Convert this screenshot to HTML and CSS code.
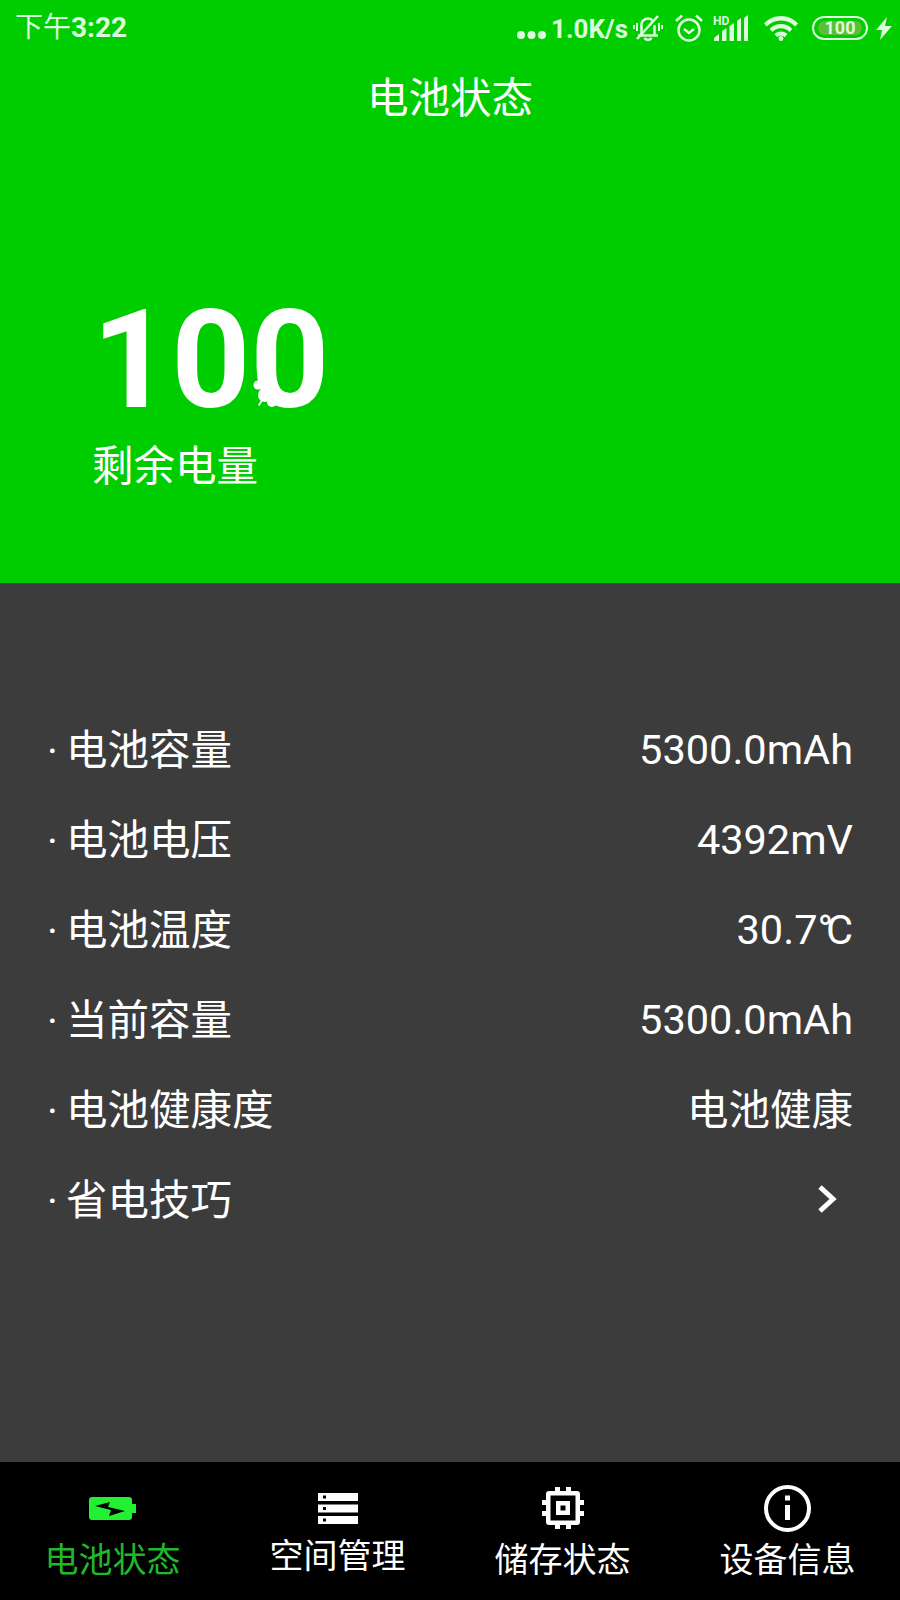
FILE: index.html
```html
<!DOCTYPE html>
<html>
<head>
    <title>电池状态</title>
    <link rel="stylesheet" href="styles.css">
</head>
<body>
    <div class="hero">
        <div class="status">
            <div class="time">下午<b>3:22</b></div>
            <div class="status-icons">
                <svg class="ic-dots" width="31" height="10" viewBox="0 0 31 10"><circle cx="5" cy="5" r="4"/><circle cx="15.500" cy="5" r="4"/><circle cx="26" cy="5" r="4"/></svg>
                <span class="speed">1.0K/s</span>
                <svg class="ic-line" width="30" height="28" viewBox="0 0 30 28" fill="none"><path d="M8.500 21v-9a6.500 6.500 0 0 1 11.500-5M21.500 11v10M5 21.500h20M11.500 24c1.500 2.500 5.500 2.500 7 0" stroke-width="2.500"/><path d="M4 25 25 2" stroke-width="2.500"/><path d="M4 9v8M1 11v4M26 9v8M29 11v4" stroke-width="2"/></svg>
                <svg class="ic-line ic-alarm" width="30" height="30" viewBox="0 0 30 30" fill="none"><circle cx="15" cy="17" r="10.500" stroke-width="2.500"/><path d="M10 16l5 4 5-4M2 8l6-5.500M22 2.500 28 8" stroke-width="2.500"/></svg>
                <svg class="ic-signal" width="36" height="26" viewBox="0 0 36 26"><path d="M1 26v-3l5-4v7zM9 26v-10l4.500-3v13zM16.500 26V11l4.500-3v18zM24 26V6l4-3v23zM31 26V3l4-3v26z"/><text x="0" y="10" class="hd">HD</text></svg>
                <svg class="ic-wifi" width="34" height="25" viewBox="0 0 36 25" preserveAspectRatio="none"><path d="M18 0C11 0 5 2.700 0 7.500l3 3C7 6.500 12 4.500 18 4.500s11 2 15 6l3-3C31 2.700 25 0 18 0z"/><path d="M18 8c-4.700 0-9 1.800-12 5l3 3c2.300-2.400 5.500-3.700 9-3.700s6.700 1.300 9 3.700l3-3c-3-3.200-7.300-5-12-5z"/><path d="M18 15.500c-2.700 0-5 1-6.800 2.700l3 3c1-.9 2.300-1.400 3.800-1.400s2.800.5 3.800 1.400l3-3c-1.800-1.700-4.100-2.700-6.800-2.700z"/><circle cx="18" cy="22.500" r="2.500"/></svg>
                <div class="batt"><div class="batt-fill">100</div></div>
                <svg class="ic-bolt" width="16" height="23" viewBox="0 0 16 23"><path d="M11 0 0 13h6l-2 10L16 9H9z"/></svg>
            </div>
        </div>
        <h1 class="title">电池状态</h1>
        <div class="level">100<svg class="blob" width="30" height="32" viewBox="0 0 30 32"><circle cx="8" cy="10" r="4.500"/><circle cx="13" cy="9" r="6"/><circle cx="15" cy="20" r="7"/><circle cx="22" cy="27" r="5"/><path d="M8 30 14 20l1.500 1-6 10z"/></svg></div>
        <div class="level-label">剩余电量</div>
    </div>

    <div class="list">
        <div class="row"><span class="dot">·</span><span class="name">电池容量</span><span class="value">5300.0mAh</span></div>
        <div class="row"><span class="dot">·</span><span class="name">电池电压</span><span class="value">4392mV</span></div>
        <div class="row"><span class="dot">·</span><span class="name">电池温度</span><span class="value">30.7<span class="deg">°</span>C</span></div>
        <div class="row"><span class="dot">·</span><span class="name">当前容量</span><span class="value">5300.0mAh</span></div>
        <div class="row"><span class="dot">·</span><span class="name">电池健康度</span><span class="value cn">电池健康</span></div>
        <div class="row"><span class="dot">·</span><span class="name">省电技巧</span>
            <svg class="arrow" width="20" height="30" viewBox="0 0 20 30" fill="none"><path d="M3 3 16 15 3 27" stroke="#fff" stroke-width="5"/></svg>
        </div>
    </div>

    <nav class="nav">
        <div class="nav-item active">
            <div class="nav-icon">
                <svg width="47" height="23" viewBox="0 0 47 23"><path fill="#22f032" d="M3 0h37a3 3 0 0 1 3 3v4h4v9h-4v4a3 3 0 0 1-3 3H3a3 3 0 0 1-3-3V3a3 3 0 0 1 3-3z"/><path fill="#000" d="M6 9 21 5l-2 5 17 4-16 5 2-6z"/></svg>
            </div>
            <div class="nav-label">电池状态</div>
        </div>
        <div class="nav-item">
            <div class="nav-icon">
                <svg width="40" height="31" viewBox="0 0 40 31"><path fill="#fff" fill-rule="evenodd" d="M0 0h40v8H0zM5 2.500v3h3v-3zM0 11.500h40v8H0zM5 14v3h3v-3zM0 23h40v8H0zM5 25.500v3h3v-3z"/></svg>
            </div>
            <div class="nav-label shift">空间管理</div>
        </div>
        <div class="nav-item">
            <div class="nav-icon">
                <svg width="42" height="42" viewBox="0 0 42 42"><path fill="#fff" fill-rule="evenodd" d="M13 0h5v4h6V0h5v4h6a3 3 0 0 1 3 3v6h4v5h-4v6h4v5h-4v6a3 3 0 0 1-3 3h-6v4h-5v-4h-6v4h-5v-4H7a3 3 0 0 1-3-3v-6H0v-5h4v-6H0v-5h4V7a3 3 0 0 1 3-3h6zM8.500 8.500v25h25v-25zM14 14h14v14H14zM18.500 18.500v5h5v-5z"/></svg>
            </div>
            <div class="nav-label">储存状态</div>
        </div>
        <div class="nav-item">
            <div class="nav-icon">
                <svg width="47" height="47" viewBox="0 0 47 47"><circle cx="23.500" cy="23.500" r="21.500" fill="none" stroke="#fff" stroke-width="4"/><path fill="#fff" d="M21 10.500h5v5h-5zM21 20h5v15h-5z"/></svg>
            </div>
            <div class="nav-label">设备信息</div>
        </div>
    </nav>
</body>
</html>
```

FILE: styles.css
```css
* {
    box-sizing: border-box;
}

body {
    margin: 0;
    width: 900px;
    height: 1600px;
    display: flex;
    flex-direction: column;
    background-color: #3c3c3c;
    color: #fff;
    font-family: Roboto, "Noto Sans CJK SC", sans-serif;
}

/* Green top part */
.hero {
    height: 583px;
    background-color: #00cd00;
    flex-shrink: 0;
}

.status {
    height: 56px;
    padding: 0 8px 0 15px;
    display: flex;
    justify-content: space-between;
    align-items: center;
    color: #dcfbdc;
}

.time {
    font-size: 28px;
    line-height: 56px;
}

.time b {
    font-weight: 700;
}

.status-icons {
    display: flex;
    align-items: center;
}

.status-icons svg {
    fill: #dcfbdc;
    flex-shrink: 0;
}

.status-icons .ic-line {
    fill: none;
    stroke: #dcfbdc;
}

.ic-dots {
    margin-top: 14px;
}

.speed {
    margin: 2px 5px 0 4px;
    font-size: 26px;
    font-weight: 700;
    line-height: 30px;
}

.ic-alarm {
    margin: 0 9px 0 11px;
}

.hd {
    font-family: Roboto, sans-serif;
    font-size: 12px;
    font-weight: 700;
}

.ic-wifi {
    margin: 0 14px 0 15px;
}

.batt {
    width: 56px;
    height: 24px;
    padding: 3px 4px;
    border: 2px solid #dcfbdc;
    border-radius: 12px;
}

.batt-fill {
    height: 14px;
    border-radius: 7px;
    background-color: #5cbf3a;
    text-align: center;
    font-size: 18px;
    font-weight: 700;
    line-height: 14px;
}

.ic-bolt {
    margin-left: 8px;
}

.title {
    margin: 17px 0 0;
    text-align: center;
    font-size: 41.500px;
    font-weight: 400;
    line-height: 52px;
}

.level {
    position: relative;
    width: 240px;
    margin: 170px 0 0 92px;
    font-size: 138px;
    font-weight: 700;
    line-height: 130px;
}

/* little white mark sitting on the last digit */
.blob {
    position: absolute;
    left: 158px;
    top: 80px;
    fill: #fff;
}

.level-label {
    margin: 16px 0 0 92px;
    font-size: 41.500px;
    line-height: 52px;
}

/* Info rows */
.list {
    flex: 1;
    padding: 122px 47px 0;
}

.row {
    height: 90px;
    display: flex;
    align-items: center;
    font-size: 41.500px;
    line-height: 52px;
}

.dot {
    width: 19px;
    margin-top: 2px;
}

.name {
    flex: 1;
    margin-top: 2px;
}

.value.cn {
    margin-top: 2px;
}

.deg {
    letter-spacing: -7px;
}

.arrow {
    margin: 0 16px 2px 0;
}

/* Bottom tabs */
.nav {
    height: 138px;
    padding-top: 22px;
    display: grid;
    grid-template-columns: repeat(4, 1fr);
    background-color: #000;
    flex-shrink: 0;
}

.nav-item {
    display: flex;
    flex-direction: column;
    align-items: center;
}

.nav-icon {
    height: 48px;
    display: flex;
    align-items: center;
    justify-content: center;
}

.nav-label {
    margin-top: 8px;
    font-size: 34px;
    line-height: 40px;
}

.nav-label.shift {
    margin-top: 4px;
}

.active .nav-label {
    color: #20b82a;
}
```
